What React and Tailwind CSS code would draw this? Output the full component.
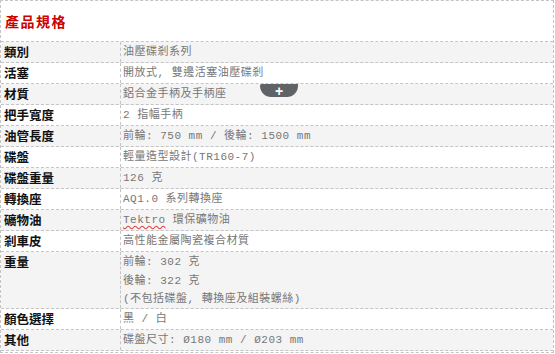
const rows = [
  { label: '類別', lines: ['油壓碟剎系列'] },
  { label: '活塞', lines: ['開放式, 雙邊活塞油壓碟剎'] },
  { label: '材質', lines: ['鋁合金手柄及手柄座'] },
  { label: '把手寬度', lines: ['2 指幅手柄'] },
  { label: '油管長度', lines: ['前輪: 750 mm / 後輪: 1500 mm'] },
  { label: '碟盤', lines: ['輕量造型設計(TR160-7)'] },
  { label: '碟盤重量', lines: ['126 克'] },
  { label: '轉換座', lines: ['AQ1.0 系列轉換座'] },
  { label: '礦物油', lines: ['tektro'] },
  { label: '剎車皮', lines: ['高性能金屬陶瓷複合材質'] },
  { label: '重量', lines: ['前輪: 302 克', '後輪: 322 克', '(不包括碟盤, 轉換座及組裝螺絲)'] },
  { label: '顏色選擇', lines: ['黑 / 白'] },
  { label: '其他', lines: ['碟盤尺寸: Ø180 mm / Ø203 mm'] },
]

function Value({ text }) {
  if (text === 'tektro') {
    return (
      <span>
        <span className="underline decoration-wavy decoration-[#e04040] underline-offset-2">Tektro</span> 環保礦物油
      </span>
    )
  }
  return <span>{text}</span>
}

export default function App() {
  return (
    <div className="w-[555px] h-[354px] bg-white overflow-hidden">
      <div className="relative w-[554px] h-[353px] border border-dashed border-[#c4c4c4] overflow-hidden">
        {/* title */}
        <div className="h-[40px] flex items-center pl-[4px]">
          <h2
            className="text-[14px] font-bold tracking-[1.5px] text-[#c00]"
            style={{ fontFamily: '"Noto Sans CJK TC", sans-serif' }}
          >
            產品規格
          </h2>
        </div>

        <div className="border-t border-dashed border-[#c4c4c4]">
          {rows.map((r, i) => (
            <div
              key={r.label}
              className={`flex border-b border-dashed border-[#c4c4c4] ${i % 2 === 0 ? 'bg-[#f4f4f4]' : 'bg-white'}`}
            >
              <div
                className="w-[120px] shrink-0 border-r border-dashed border-[#c4c4c4] pl-[3px] text-[12.5px] font-bold leading-[20px] text-[#111]"
                style={{ fontFamily: '"Noto Sans CJK TC", sans-serif' }}
              >
                {r.label}
              </div>
              <div
                className="flex-1 pl-[2px] text-[11px] leading-[20px] text-[#777]"
                style={{ fontFamily: '"Liberation Mono", "Noto Sans CJK TC", monospace' }}
              >
                {r.lines.map((l, j) => (
                  <div key={l} className={`tracking-[0.5px] ${j > 0 ? 'leading-[18px]' : ''}`}>
                    <Value text={l} />
                  </div>
                ))}
              </div>
            </div>
          ))}
        </div>

        {/* collapse handle */}
        <div className="absolute left-[259px] top-[83px] w-[38px] h-[13px] bg-[#5f6266] rounded-b-[12px] rounded-tl-[2px] flex items-center justify-center">
          <span className="text-white text-[14px] font-bold leading-none" style={{ fontFamily: '"Liberation Sans", sans-serif' }}>+</span>
        </div>
      </div>
    </div>
  )
}
